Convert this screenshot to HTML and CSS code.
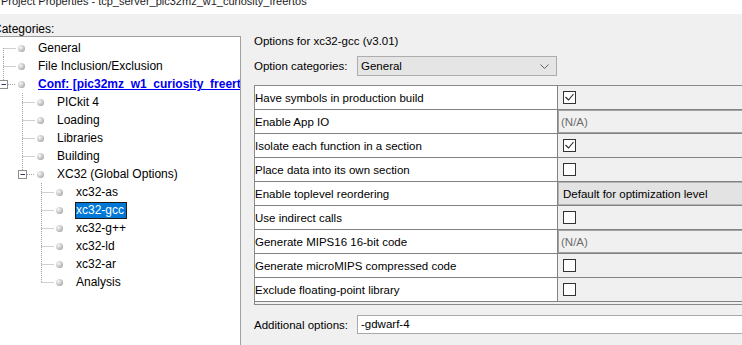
FILE: index.html
```html
<!DOCTYPE html>
<html lang="en">
<head>
  <meta charset="UTF-8">
  <title>Project Properties</title>
  <link rel="stylesheet" href="styles.css">
</head>
<body>
  <div class="titlebar"><span>Project Properties - tcp_server_pic32mz_w1_curiosity_freertos</span></div>

  <div class="main">
    <div class="categories">
      <div class="cat-label">Categories:</div>
      <div class="tree">
        <div class="node">
          <svg class="wire" viewBox="0 0 19 18"><path d="M10.5 9V18M10.5 9.5H23"/></svg>
          <span class="ico"><i class="ball"></i></span><span class="name">General</span>
        </div>
        <div class="node">
          <svg class="wire" viewBox="0 0 19 18"><path d="M10.5 0V18M10.5 9.5H23"/></svg>
          <span class="ico"><i class="ball"></i></span><span class="name">File Inclusion/Exclusion</span>
        </div>
        <div class="node">
          <svg class="wire" viewBox="0 0 19 18"><path d="M10.5 0V5M15 9.5H23"/><rect x="6.5" y="5.5" width="8" height="8"/><path class="minus" d="M8.5 9.5H13"/></svg>
          <span class="ico"><i class="ball"></i></span><span class="name conf">Conf: [pic32mz_w1_curiosity_freertos]</span>
        </div>

        <div class="node l1">
          <svg class="wire" viewBox="0 0 19 18"><path d="M10.5 0V18M10.5 9.5H23"/></svg>
          <span class="ico"><i class="ball"></i></span><span class="name">PICkit 4</span>
        </div>
        <div class="node l1">
          <svg class="wire" viewBox="0 0 19 18"><path d="M10.5 0V18M10.5 9.5H23"/></svg>
          <span class="ico"><i class="ball"></i></span><span class="name">Loading</span>
        </div>
        <div class="node l1">
          <svg class="wire" viewBox="0 0 19 18"><path d="M10.5 0V18M10.5 9.5H23"/></svg>
          <span class="ico"><i class="ball"></i></span><span class="name">Libraries</span>
        </div>
        <div class="node l1">
          <svg class="wire" viewBox="0 0 19 18"><path d="M10.5 0V18M10.5 9.5H23"/></svg>
          <span class="ico"><i class="ball"></i></span><span class="name">Building</span>
        </div>
        <div class="node l1">
          <svg class="wire" viewBox="0 0 19 18"><path d="M10.5 0V5M15 9.5H23"/><rect x="6.5" y="5.5" width="8" height="8"/><path class="minus" d="M8.5 9.5H13"/></svg>
          <span class="ico"><i class="ball"></i></span><span class="name">XC32 (Global Options)</span>
        </div>

        <div class="node l2">
          <svg class="wire" viewBox="0 0 19 18"><path d="M10.5 0V18M10.5 9.5H23"/></svg>
          <span class="ico"><i class="ball"></i></span><span class="name">xc32-as</span>
        </div>
        <div class="node l2">
          <svg class="wire" viewBox="0 0 19 18"><path d="M10.5 0V18M10.5 9.5H23"/></svg>
          <span class="ico"><i class="ball"></i></span><span class="name sel">xc32-gcc</span>
        </div>
        <div class="node l2">
          <svg class="wire" viewBox="0 0 19 18"><path d="M10.5 0V18M10.5 9.5H23"/></svg>
          <span class="ico"><i class="ball"></i></span><span class="name">xc32-g++</span>
        </div>
        <div class="node l2">
          <svg class="wire" viewBox="0 0 19 18"><path d="M10.5 0V18M10.5 9.5H23"/></svg>
          <span class="ico"><i class="ball"></i></span><span class="name">xc32-ld</span>
        </div>
        <div class="node l2">
          <svg class="wire" viewBox="0 0 19 18"><path d="M10.5 0V18M10.5 9.5H23"/></svg>
          <span class="ico"><i class="ball"></i></span><span class="name">xc32-ar</span>
        </div>
        <div class="node l2">
          <svg class="wire" viewBox="0 0 19 18"><path d="M10.5 0V10M10.5 9.5H23"/></svg>
          <span class="ico"><i class="ball"></i></span><span class="name">Analysis</span>
        </div>
      </div>
    </div>

    <div class="options">
      <div class="opt-title">Options for xc32-gcc (v3.01)</div>
      <div class="opt-cat">
        <span class="field-label">Option categories:</span>
        <div class="select">
          <span>General</span>
          <svg class="chev" viewBox="0 0 9 5"><polyline points="0.5,0.5 4.5,4.5 8.5,0.5"/></svg>
        </div>
      </div>

      <div class="grid">
        <div class="row">
          <div class="k">Have symbols in production build</div>
          <div class="v"><span class="cb"><svg viewBox="0 0 11 11"><polyline points="1.5,5 4.5,8 9.5,2"/></svg></span></div>
        </div>
        <div class="row">
          <div class="k">Enable App IO</div>
          <div class="v na">(N/A)</div>
        </div>
        <div class="row">
          <div class="k">Isolate each function in a section</div>
          <div class="v"><span class="cb"><svg viewBox="0 0 11 11"><polyline points="1.5,5 4.5,8 9.5,2"/></svg></span></div>
        </div>
        <div class="row">
          <div class="k">Place data into its own section</div>
          <div class="v"><span class="cb"></span></div>
        </div>
        <div class="row">
          <div class="k">Enable toplevel reordering</div>
          <div class="v combo">Default for optimization level</div>
        </div>
        <div class="row">
          <div class="k">Use indirect calls</div>
          <div class="v"><span class="cb"></span></div>
        </div>
        <div class="row">
          <div class="k">Generate MIPS16 16-bit code</div>
          <div class="v na">(N/A)</div>
        </div>
        <div class="row">
          <div class="k">Generate microMIPS compressed code</div>
          <div class="v"><span class="cb"></span></div>
        </div>
        <div class="row">
          <div class="k">Exclude floating-point library</div>
          <div class="v"><span class="cb"></span></div>
        </div>
      </div>

      <div class="addl">
        <span class="field-label">Additional options:</span>
        <div class="input">-gdwarf-4</div>
      </div>
    </div>
  </div>
</body>
</html>
```

FILE: styles.css
```css
* {
  box-sizing: border-box;
}

body {
  margin: 0;
  width: 742px;
  height: 345px;
  overflow: hidden;
  background: #f0f0f0;
  font-family: "Liberation Sans", Arial, sans-serif;
  font-size: 12px;
  color: #000;
}

.titlebar {
  height: 14px;
  background: #fff;
  overflow: hidden;
  white-space: nowrap;
}

.titlebar span {
  display: block;
  font-size: 11px;
  line-height: 12px;
  margin-top: -5px;
  padding-left: 1px;
  color: #1a1a1a;
}

.main {
  display: flex;
  padding-top: 9px;
}

/* left: category tree */
.categories {
  flex: none;
  width: 251px;
  margin-left: -10px;
}

.cat-label {
  padding-left: 3px;
  line-height: 13px;
}

.tree {
  height: 320px;
  background: #fff;
  border: 1px solid #a0a0a0;
  padding: 2px 0 0 2px;
  overflow: hidden;
}

.node {
  display: flex;
  align-items: center;
  height: 18px;
  white-space: nowrap;
}

.node.l1 {
  padding-left: 19px;
}

.node.l2 {
  padding-left: 38px;
}

.wire {
  flex: none;
  width: 19px;
  height: 18px;
  overflow: visible;
}

.wire path {
  fill: none;
  stroke: #a0a0a0;
  stroke-width: 1;
  stroke-dasharray: 1 1;
}

.wire rect {
  fill: #fff;
  stroke: #8f8f8f;
}

.wire path.minus {
  stroke: #2a3a5a;
  stroke-dasharray: none;
}

.ico {
  flex: none;
  width: 19px;
  height: 18px;
  display: flex;
  align-items: center;
  justify-content: center;
}

.ball {
  width: 7px;
  height: 7px;
  border-radius: 50%;
  background: radial-gradient(circle at 35% 35%, #f6f6f6 0, #cdcdcd 45%, #8c8c8c 100%);
}

.name {
  margin-left: 7px;
}

.name.conf {
  color: #0000f0;
  font-weight: bold;
  text-decoration: underline;
}

.name.sel {
  margin-left: 6px;
  padding: 0 2px 0 0;
  line-height: 15px;
  background: #0078d7;
  color: #fff;
  border: 1px solid #1b1b1b;
}

/* right: options */
.options {
  flex: 1;
  min-width: 0;
  padding: 11px 0 0 13px;
  overflow: hidden;
  font-size: 11.5px;
}

.opt-title {
  line-height: 14px;
}

.opt-cat,
.addl {
  display: flex;
  align-items: center;
}

.opt-cat {
  margin-top: 8px;
}

.field-label {
  flex: none;
  width: 103px;
}

.select {
  flex: none;
  width: 200px;
  height: 20px;
  display: flex;
  align-items: center;
  justify-content: space-between;
  padding: 0 7px 0 3px;
  background: #e5e5e5;
  border: 1px solid #adadad;
}

.chev {
  width: 9px;
  height: 5px;
}

.chev polyline {
  fill: none;
  stroke: #606060;
}

.grid {
  width: 600px;
  margin-top: 9px;
  padding-bottom: 2px;
  border: 1px solid #8a8a8a;
}

.row {
  display: flex;
  height: 24px;
  border-bottom: 1px solid #828282;
}

.row .k {
  flex: none;
  width: 303px;
  line-height: 24px;
  background: #fff;
  border-right: 1px solid #828282;
  white-space: nowrap;
}

.row .v {
  flex: 1;
  display: flex;
  align-items: center;
  padding-left: 5px;
}

.row .v.na {
  padding-left: 2px;
  color: #6d6d6d;
  border: 1px solid #a3a3a3;
}

.row .v.combo {
  padding-left: 4px;
  background: #e3e3e3;
  border: 1px solid #b4b4b4;
}

.cb {
  width: 13px;
  height: 13px;
  background: #fff;
  border: 1px solid #333;
}

.cb svg {
  display: block;
  width: 11px;
  height: 11px;
}

.cb polyline {
  fill: none;
  stroke: #222;
  stroke-width: 1.1;
}

.addl {
  margin-top: 10px;
}

.input {
  flex: none;
  width: 500px;
  height: 19px;
  line-height: 17px;
  padding-left: 3px;
  background: #fff;
  border: 1px solid #a9a9a9;
}
```
